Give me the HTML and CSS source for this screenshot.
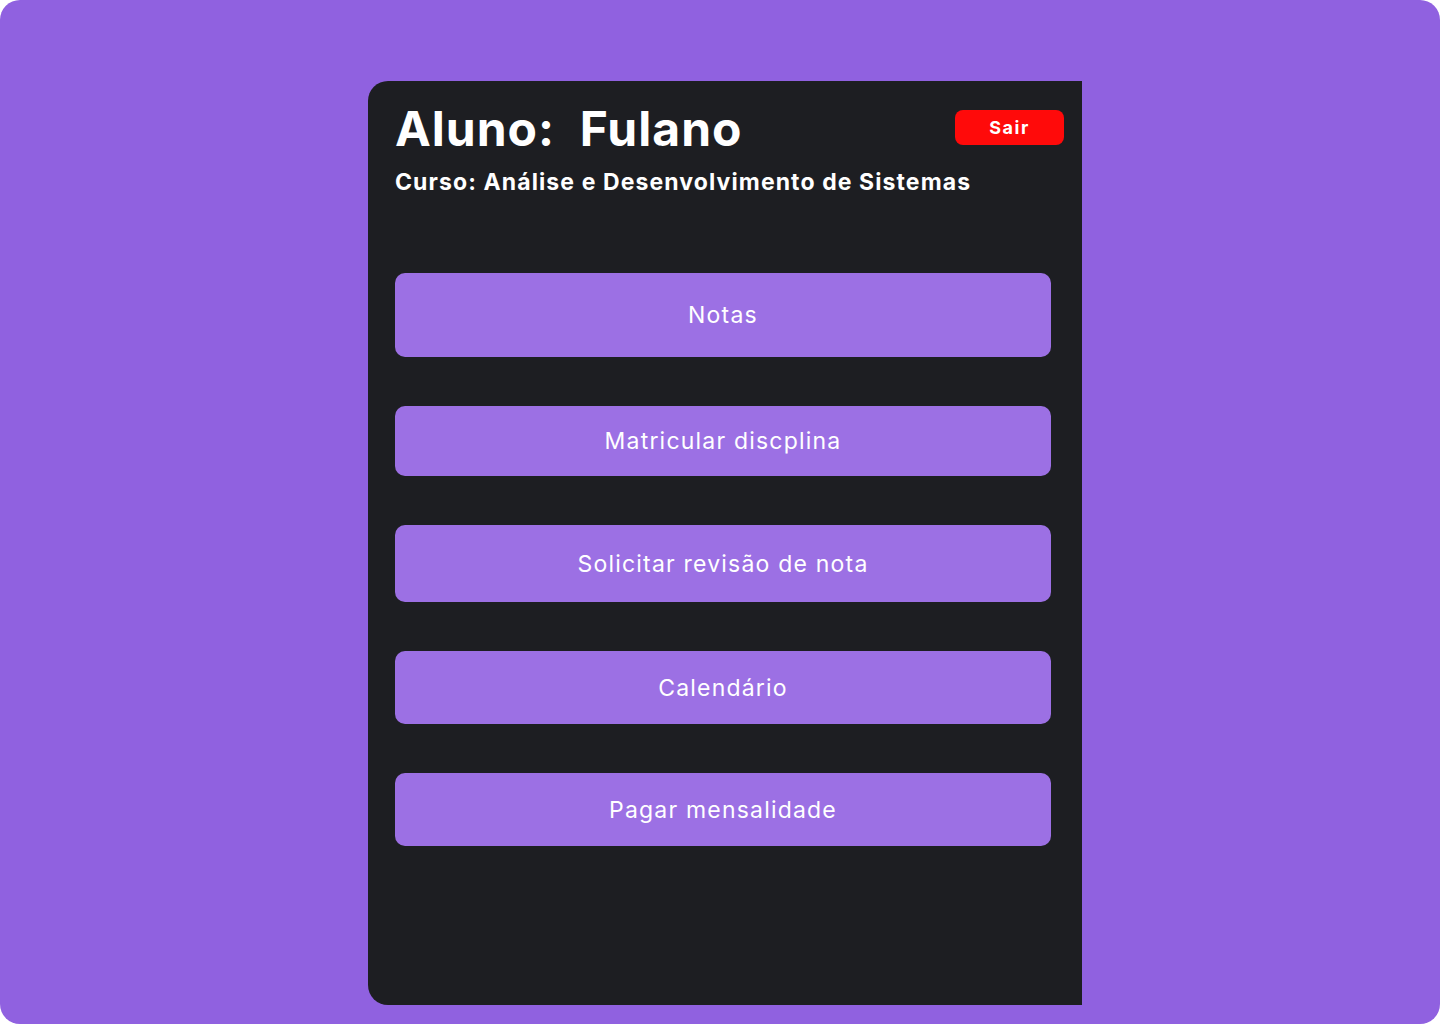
FILE: index.html
```html
<!DOCTYPE html>
<html lang="pt-BR">
<head>
<meta charset="utf-8">
<title>Aluno</title>
<link rel="stylesheet" href="styles.css">
</head>
<body>
<div class="screen">
  <main class="panel">
    <header class="head">
      <div class="head-top">
        <h1 class="title">Aluno:&nbsp; Fulano</h1>
        <button class="logout">Sair</button>
      </div>
      <p class="course">Curso: Análise e Desenvolvimento de Sistemas</p>
    </header>
    <nav class="menu">
      <button class="item item-notas">Notas</button>
      <button class="item item-b">Matricular discplina</button>
      <button class="item item-c">Solicitar revisão de nota</button>
      <button class="item item-d">Calendário</button>
      <button class="item item-d">Pagar mensalidade</button>
    </nav>
  </main>
</div>
</body>
</html>
```

FILE: styles.css
```css
* { box-sizing: border-box; }
html, body { margin: 0; padding: 0; background: #ffffff; }
body { font-family: "Inter", "Noto Sans", sans-serif; }
.screen {
  width: 1440px;
  height: 1024px;
  background: #9061e0;
  border-radius: 20px;
  padding: 81px 0 0 368px;
}
.panel {
  width: 714px;
  height: 924px;
  background: #1d1e22;
  border-radius: 20px 0 0 20px;
  padding: 20px 18px 0 27px;
}
.head-top {
  display: flex;
  justify-content: space-between;
  align-items: flex-start;
}
.title {
  margin: 0;
  color: #fff;
  font-size: 48px;
  font-weight: 700;
  line-height: 56px;
  letter-spacing: 1px;
}
.logout {
  margin-top: 9px;
  width: 109px;
  height: 35px;
  border: 0;
  border-radius: 8px;
  background: #ff0a0a;
  color: #fff;
  font-family: inherit;
  font-size: 18px;
  font-weight: 700;
  letter-spacing: 1.5px;
  padding: 0;
}
.course {
  margin: 10px 0 0;
  color: #fff;
  font-size: 23px;
  font-weight: 700;
  line-height: 30px;
  letter-spacing: 1.1px;
}
.menu {
  margin-top: 76px;
  width: 656px;
  display: flex;
  flex-direction: column;
  gap: 49px;
}
.item {
  border: 0;
  border-radius: 10px;
  background: #9c70e4;
  color: #fff;
  font-family: inherit;
  font-size: 23px;
  font-weight: 400;
  letter-spacing: 1.2px;
  padding: 0;
}
.item-notas { height: 84px; }
.item-b { height: 70px; }
.item-c { height: 77px; }
.item-d { height: 73px; }
```
